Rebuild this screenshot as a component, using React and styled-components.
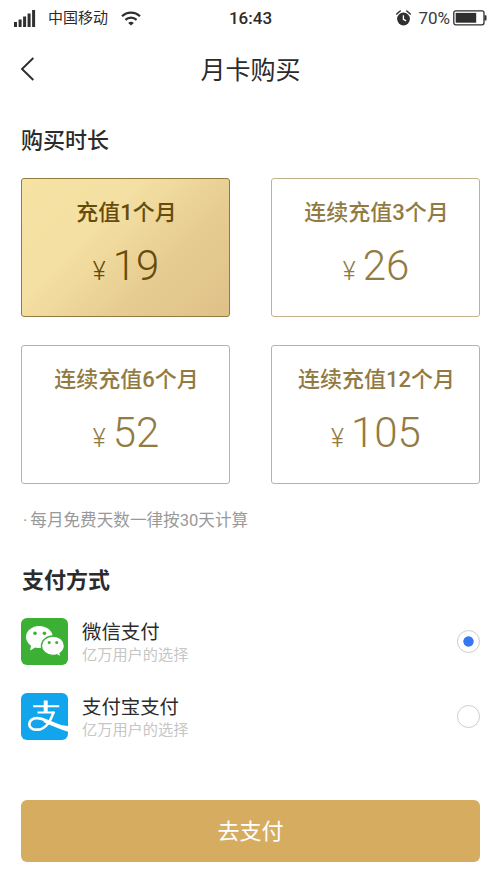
import React, { useState } from "react";
import styled, { createGlobalStyle, css } from "styled-components";

const GlobalStyle = createGlobalStyle`
  * {
    box-sizing: border-box;
  }

  body {
    margin: 0;
    background: #fff;
    color: #2b2b2b;
    font-family: Roboto, "Noto Sans CJK SC", sans-serif;
  }
`;

const Screen = styled.div`
  width: 500px;
  height: 889px;
  overflow: hidden;
  background: #fff;
`;

const StatusBar = styled.header`
  display: grid;
  grid-template-columns: 1fr auto 1fr;
  align-items: center;
  height: 36px;
  padding: 0 13px 0 14px;
`;

const StatusGroup = styled.div`
  display: flex;
  align-items: center;
  justify-content: ${(props) => (props.$end ? "flex-end" : "flex-start")};
`;

const Carrier = styled.span`
  margin: 0 13px 0 12px;
  font-size: 15px;
  line-height: 20px;
`;

const Clock = styled.span`
  font-size: 17px;
  font-weight: 500;
  line-height: 20px;
`;

const Charge = styled.span`
  margin: 0 3px 0 7px;
  color: #3a3a3a;
  font-size: 17px;
  line-height: 20px;
`;

const NavBar = styled.nav`
  display: grid;
  grid-template-columns: 40px 1fr 40px;
  align-items: center;
  height: 66px;
  padding: 0 19px 0 20px;
`;

const BackButton = styled.button`
  display: flex;
  padding: 0;
  border: 0;
  background: none;
`;

const PageTitle = styled.h1`
  margin: 0;
  padding-top: 3px;
  font-size: 25px;
  font-weight: 400;
  line-height: 36px;
  text-align: center;
`;

const Content = styled.main`
  padding: 0 20px 0 21px;
`;

const SectionTitle = styled.h2`
  margin: 0;
  font-size: 22px;
  font-weight: 500;
  line-height: 30px;
`;

const DurationTitle = styled(SectionTitle)`
  padding-top: 24px;
`;

const PaymentTitle = styled(SectionTitle)`
  margin: 33px 0 0 1px;
  font-weight: 700;
`;

const PlanGrid = styled.div`
  display: grid;
  grid-template-columns: 209px 209px;
  grid-auto-rows: 139px;
  gap: 28px 41px;
  margin-top: 22px;
`;

const PlanCard = styled.button`
  display: flex;
  flex-direction: column;
  align-items: center;
  padding: 18px 0 0;
  border: 1px solid #c3b38c;
  border-radius: 3px;
  background: #fff;
  color: #927b43;
  font-family: inherit;

  ${(props) =>
    props.$selected &&
    css`
      border-color: #937b40;
      background: linear-gradient(
        135deg,
        #f6e3a4 0%,
        #f4e0a2 35%,
        #e7cd92 65%,
        #dfc188 100%
      );
      color: #664c0b;
    `}
`;

const PlanName = styled.span`
  padding-left: 2px;
  font-size: 22px;
  font-weight: 500;
  line-height: 32px;
`;

const PlanPrice = styled.span`
  display: flex;
  align-items: baseline;
  margin-top: 12px;
  padding-left: 1px;
  font-size: 42px;
  font-weight: 300;
  line-height: 50px;
`;

const Currency = styled.span`
  margin-right: 7px;
  font-size: 25px;
`;

const Note = styled.p`
  display: flex;
  gap: 3px;
  margin: 25px 0 0 2px;
  color: #999;
  font-size: 16.6px;
  line-height: 24px;
`;

const MethodList = styled.div`
  display: flex;
  flex-direction: column;
  gap: 28px;
  margin-top: 22px;
`;

const MethodRow = styled.label`
  display: flex;
  align-items: center;
  height: 47px;
`;

const MethodText = styled.span`
  display: flex;
  flex: 1;
  flex-direction: column;
  padding-top: 2px;
  margin-left: 14px;
`;

const MethodName = styled.span`
  font-size: 19.4px;
  line-height: 25px;
`;

const MethodHint = styled.span`
  color: #c6c6c6;
  font-size: 15.2px;
  line-height: 21px;
`;

const Radio = styled.input`
  width: 23px;
  height: 23px;
  margin: 0;
  appearance: none;
  border: 1.5px solid #cdcdcf;
  border-radius: 50%;
  background: #fff;

  &:checked {
    background: radial-gradient(circle, #3478f6 4.8px, #fff 5.5px);
  }
`;

const PayButton = styled.button`
  width: 459px;
  height: 62px;
  margin-top: 60px;
  padding: 2px 0 0;
  border: 0;
  border-radius: 6px;
  background: #d6ad60;
  color: #fff;
  font-family: inherit;
  font-size: 22px;
  line-height: 32px;
`;

const SignalIcon = () => (
  <svg width="22" height="17" viewBox="0 0 22 17" fill="#2f2f2f">
    <rect x="0" y="12" width="3" height="5" />
    <rect x="4.6" y="9.5" width="3" height="7.5" />
    <rect x="9.1" y="6.5" width="3" height="10.5" />
    <rect x="13.6" y="3.5" width="3" height="13.5" />
    <rect x="18.1" y="0" width="3" height="17" />
  </svg>
);

const WifiIcon = () => (
  <svg width="20" height="15" viewBox="0 0 20 15" fill="none">
    <path d="M1 5.3C6 .4 14 .4 19 5.3" stroke="#2f2f2f" strokeWidth="2.2" />
    <path d="M4.4 8.9c3.2-3.1 8-3.1 11.2 0" stroke="#2f2f2f" strokeWidth="2.2" />
    <path d="M7.2 11.9c1.6-1.6 4-1.6 5.6 0L10 14.6z" fill="#2f2f2f" />
  </svg>
);

const AlarmIcon = () => (
  <svg width="15" height="16" viewBox="0 0 15 16" fill="none">
    <circle cx="7.5" cy="9" r="6.4" fill="#2f2f2f" />
    <path
      d="M.7 4 4.2 1M14.3 4l-3.5-3"
      stroke="#2f2f2f"
      strokeWidth="1.5"
      strokeLinecap="round"
    />
    <path d="M7.4 5.2v4.2l2.7 1.5" stroke="#fff" strokeWidth="1.3" />
  </svg>
);

const BatteryIcon = () => (
  <svg width="34" height="16" viewBox="0 0 34 16" fill="none">
    <rect x=".8" y=".8" width="30.2" height="14" rx="2" stroke="#2f2f2f" strokeWidth="1.3" />
    <rect x="2.7" y="2.9" width="20.5" height="9.8" fill="#2f2f2f" />
    <rect x="31.5" y="5.2" width="2" height="5.4" rx=".6" fill="#2f2f2f" />
  </svg>
);

const BackIcon = () => (
  <svg width="15" height="24" viewBox="0 0 15 24" fill="none">
    <path d="M13.3 1 2 12l11.3 11" stroke="#2b2b2b" strokeWidth="1.9" />
  </svg>
);

const WechatIcon = () => (
  <svg width="47" height="47" viewBox="0 0 47 47">
    <rect width="47" height="47" rx="6" fill="#3cb034" />
    <path
      d="M18.4 8C10.9 8 5 12.9 5 19.1c0 3.5 1.9 6.6 5 8.6l-.9 4.7 5.1-3c1.3.4 2.8.6 4.2.6 7.5 0 13.4-4.8 13.4-10.9S25.9 8 18.4 8z"
      fill="#fff"
    />
    <path
      d="M31.9 18c6.3 0 11.5 4.4 11.5 9.8 0 3.1-1.7 5.8-4.3 7.5l.8 3.7-4.2-2.2c-1.2.4-2.4.6-3.8.6-6.3 0-11.5-4.3-11.5-9.6S25.6 18 31.9 18z"
      fill="#fff"
      stroke="#3cb034"
      strokeWidth="1.3"
    />
    <g fill="#3cb034">
      <circle cx="14" cy="15.2" r="1.8" />
      <circle cx="23.4" cy="15.2" r="1.8" />
      <circle cx="28.2" cy="24.4" r="1.5" />
      <circle cx="35.7" cy="24.4" r="1.5" />
    </g>
  </svg>
);

const AlipayIcon = () => (
  <svg width="47" height="47" viewBox="0 0 47 47" fill="none">
    <rect width="47" height="47" rx="6" fill="#10a5ec" />
    <path d="M24.7 7.5v12" stroke="#fff" strokeWidth="4" />
    <path d="M12.2 13.2h26M16.5 19.5H34" stroke="#fff" strokeWidth="2.1" />
    <path
      d="M32.6 18.8c-2.3 7.5-7.6 17.9-16.6 17.9-5 0-7.7-2.4-7.7-5.5 0-3.4 3.1-6 7.7-6 7.5 0 15.5 6.3 31 10.6"
      stroke="#fff"
      strokeWidth="2.7"
    />
    <path d="M24 27.6c7.2 3.1 14.5 4.7 23 5.4v5.7c-8.8-2.5-17.5-6.5-24.8-9.7z" fill="#fff" />
  </svg>
);

const plans = [
  { name: "充值1个月", price: 19 },
  { name: "连续充值3个月", price: 26 },
  { name: "连续充值6个月", price: 52 },
  { name: "连续充值12个月", price: 105 },
];

const methods = [
  { id: "wechat", name: "微信支付", hint: "亿万用户的选择", Icon: WechatIcon },
  { id: "alipay", name: "支付宝支付", hint: "亿万用户的选择", Icon: AlipayIcon },
];

export default function App() {
  const [plan, setPlan] = useState(0);
  const [method, setMethod] = useState("wechat");

  return (
    <Screen>
      <GlobalStyle />
      <StatusBar>
        <StatusGroup>
          <SignalIcon />
          <Carrier>中国移动</Carrier>
          <WifiIcon />
        </StatusGroup>
        <Clock>16:43</Clock>
        <StatusGroup $end>
          <AlarmIcon />
          <Charge>70%</Charge>
          <BatteryIcon />
        </StatusGroup>
      </StatusBar>

      <NavBar>
        <BackButton>
          <BackIcon />
        </BackButton>
        <PageTitle>月卡购买</PageTitle>
      </NavBar>

      <Content>
        <DurationTitle>购买时长</DurationTitle>
        <PlanGrid>
          {plans.map((item, index) => (
            <PlanCard
              key={item.name}
              $selected={index === plan}
              onClick={() => setPlan(index)}>
              <PlanName>{item.name}</PlanName>
              <PlanPrice>
                <Currency>¥</Currency>
                {item.price}
              </PlanPrice>
            </PlanCard>
          ))}
        </PlanGrid>
        <Note>
          <span>·</span>
          每月免费天数一律按30天计算
        </Note>

        <PaymentTitle>支付方式</PaymentTitle>
        <MethodList>
          {methods.map(({ id, name, hint, Icon }) => (
            <MethodRow key={id}>
              <Icon />
              <MethodText>
                <MethodName>{name}</MethodName>
                <MethodHint>{hint}</MethodHint>
              </MethodText>
              <Radio
                type="radio"
                name="method"
                checked={method === id}
                onChange={() => setMethod(id)}
              />
            </MethodRow>
          ))}
        </MethodList>

        <PayButton>去支付</PayButton>
      </Content>
    </Screen>
  );
}
